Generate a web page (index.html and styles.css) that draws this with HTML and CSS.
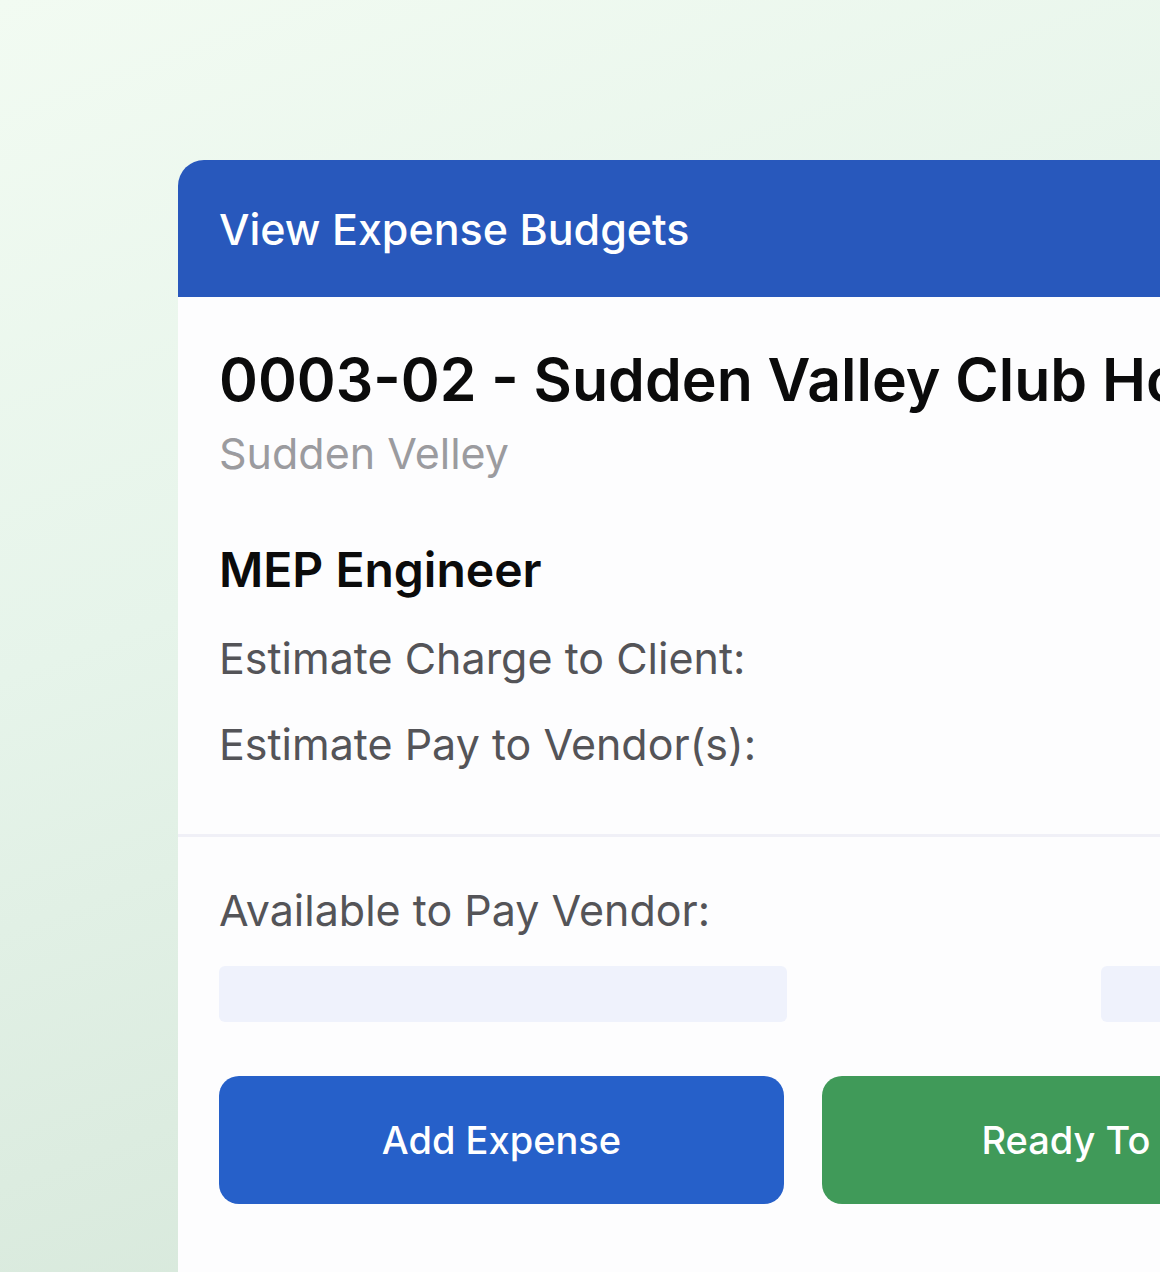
FILE: index.html
```html
<!DOCTYPE html>
<html>
<head>
<meta charset="utf-8">
<link rel="stylesheet" href="styles.css">
</head>
<body>
<div class="stage">
  <div class="card">
    <div class="card-header">View Expense Budgets</div>
    <div class="card-body">
      <h1 class="job-title">0003-02 - Sudden Valley Club House</h1>
      <div class="job-sub">Sudden Velley</div>
      <h2 class="budget-name">MEP Engineer</h2>
      <div class="line">Estimate Charge to Client:</div>
      <div class="line">Estimate Pay to Vendor(s):</div>
    </div>
    <div class="divider"></div>
    <div class="card-body lower">
      <div class="line">Available to Pay Vendor:</div>
      <div class="values">
        <div class="value-box"></div>
        <div class="value-box"></div>
      </div>
      <div class="actions">
        <div class="btn btn-blue">Add Expense</div>
        <div class="btn btn-green">Ready To Pay</div>
      </div>
    </div>
  </div>
</div>
</body>
</html>
```

FILE: styles.css
```css
html, body {
  margin: 0;
  padding: 0;
  width: 1160px;
  height: 1272px;
  overflow: hidden;
}
body {
  font-family: Inter, "Noto Sans", sans-serif;
  background: linear-gradient(160deg, #f2fbf2 0%, #e6f4ea 40%, #d2e4d6 100%);
}
.stage {
  padding-top: 160px;
  padding-left: 178px;
}
.card {
  width: 1300px;
  height: 1200px;
  background: #fdfdfe;
  border-top-left-radius: 26px;
  overflow: hidden;
}
.card-header {
  height: 137px;
  background: #2858bc;
  color: #fff;
  font-size: 43px;
  font-weight: 500;
  display: flex;
  align-items: center;
  padding-left: 41px;
}
.card-body {
  padding: 0 0 0 41px;
}
.job-title {
  margin: 48px 0 0 0;
  font-size: 59px;
  font-weight: 600;
  line-height: 70px;
  color: #0b0b0b;
  white-space: nowrap;
}
.job-sub {
  font-size: 43px;
  line-height: 52px;
  color: #9b9b9f;
  margin-top: 12px;
}
.budget-name {
  margin: 62px 0 0 0;
  font-size: 48px;
  font-weight: 600;
  line-height: 58px;
  color: #0b0b0b;
}
.line {
  font-size: 43px;
  line-height: 52px;
  color: #545458;
  white-space: nowrap;
}
.budget-name + .line {
  margin-top: 33px;
}
.line + .line {
  margin-top: 34px;
}
.divider {
  margin-top: 64px;
  height: 3px;
  background: #f0f0f7;
}
.lower .line {
  margin-top: 47px;
}
.values {
  display: flex;
  gap: 314px;
  margin-top: 30px;
}
.value-box {
  flex: 0 0 568px;
  height: 56px;
  background: #eff2fc;
  border-radius: 6px;
}
.actions {
  display: flex;
  gap: 38px;
  margin-top: 54px;
}
.btn {
  flex: 0 0 565px;
  height: 128px;
  border-radius: 20px;
  color: #fff;
  font-size: 38px;
  font-weight: 500;
  display: flex;
  align-items: center;
  justify-content: center;
  white-space: nowrap;
}
.btn-blue {
  background: #2660c9;
}
.btn-green {
  background: #409a59;
}
```
